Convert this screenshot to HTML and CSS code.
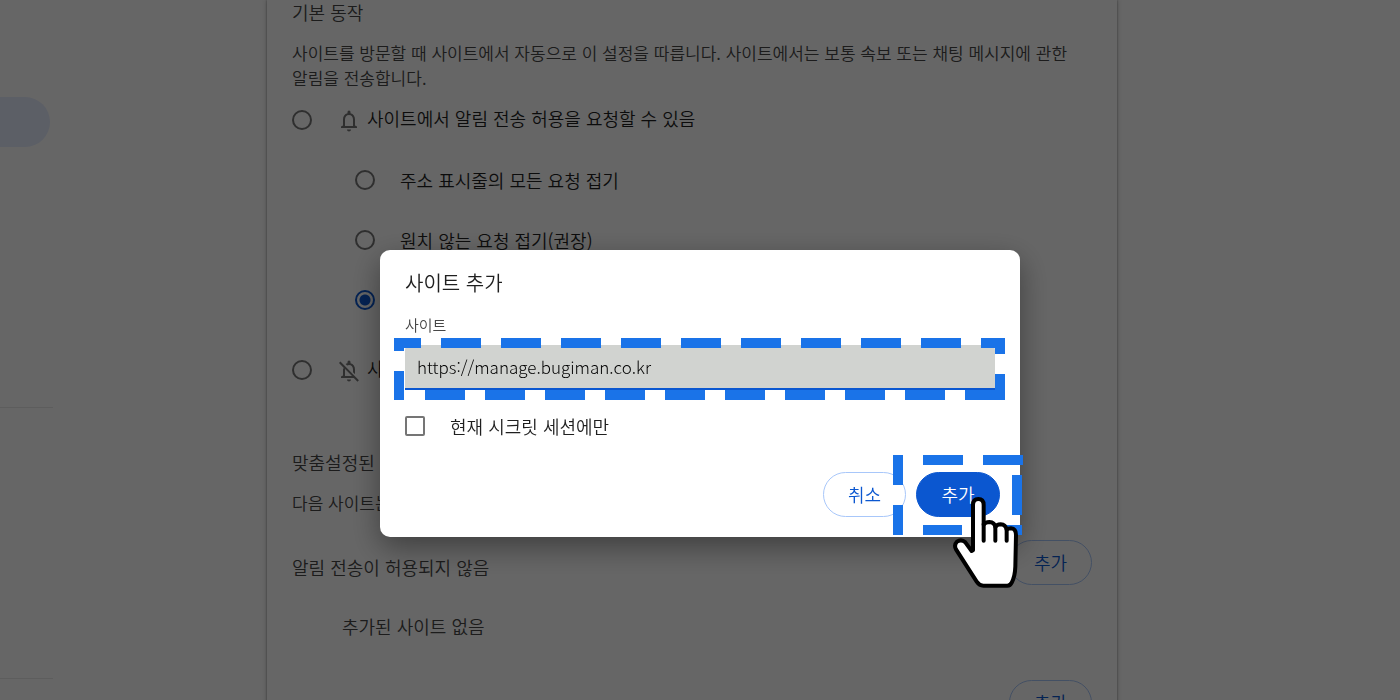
FILE: index.html
```html
<!DOCTYPE html>
<html lang="ko">
<head>
    <meta charset="UTF-8">
    <meta name="viewport" content="width=device-width, initial-scale=1.0">
    <title>알림 설정</title>
    <link rel="stylesheet" href="styles.css">
</head>
<body>
    <div class="page">
        <nav class="sidebar">
            <div class="selected"></div>
            <hr class="line1">
            <hr class="line2">
        </nav>
        <main class="card">
            <h2>기본 동작</h2>
            <p class="desc">사이트를 방문할 때 사이트에서 자동으로 이 설정을 따릅니다. 사이트에서는 보통 속보 또는 채팅 메시지에 관한 알림을 전송합니다.</p>

            <label class="row main">
                <input type="radio" name="basic">
                <svg class="bell" viewBox="0 0 24 24"><path d="M12 22.500c1.100 0 2-.9 2-2h-4c0 1.100.9 2 2 2zm6-6v-6c0-3.100-1.600-5.600-4.500-6.300V3a1.500 1.500 0 0 0-3 0v1.200C7.600 4.900 6 7.400 6 10.500v6l-2 1v1.500h16v-1.500zm-2 .5H8v-6.500C8 8 9.500 6 12 6s4 2 4 4.500z"/></svg>
                <span>사이트에서 알림 전송 허용을 요청할 수 있음</span>
            </label>
            <div class="sub">
                <label class="row"><input type="radio" name="quiet"><span>주소 표시줄의 모든 요청 접기</span></label>
                <label class="row"><input type="radio" name="quiet"><span>원치 않는 요청 접기(권장)</span></label>
                <label class="row"><input type="radio" name="quiet" checked></label>
            </div>
            <label class="row main block">
                <input type="radio" name="basic">
                <svg class="bell" viewBox="0 0 24 24"><path d="M12 22.500c1.100 0 2-.9 2-2h-4c0 1.100.9 2 2 2zM12 6c2.500 0 4 2 4 4.500v2.800l2 2v-4.800c0-3.100-1.600-5.600-4.500-6.300V3a1.500 1.500 0 0 0-3 0v1.200c-.7.200-1.300.4-1.900.8l1.500 1.500C10.700 6.200 11.300 6 12 6zM3.400 2.600 2 4l4.800 4.900c-.5.500-.8 1-.8 1.600v6l-2 1v1.500h12.800l3.700 3.700 1.400-1.400zM8 17v-6.500l.1-.4L15 17z"/></svg>
                <span>사이트</span>
            </label>

            <h2 class="custom">맞춤설정된 동작</h2>
            <p class="desc">다음 사이트는</p>

            <div class="listhead">
                <h2>알림 전송이 허용되지 않음</h2>
                <button type="button" class="btn">추가</button>
            </div>
            <p class="empty">추가된 사이트 없음</p>
            <div class="listhead last">
                <button type="button" class="btn">추가</button>
            </div>
        </main>
    </div>

    <div class="overlay">
        <div class="dialog" role="dialog" aria-labelledby="title">
            <h1 id="title">사이트 추가</h1>
            <label class="fieldname" for="site">사이트</label>
            <div class="field">
                <input type="text" id="site" value="https://manage.bugiman.co.kr">
                <!-- 입력란 강조 점선 -->
                <svg class="mark1" viewBox="0 0 611 62">
                    <path d="M0 5h27M47 5h551" stroke-dasharray="40 20" />
                    <path d="M587 5h24M606 0v16M606 36v26M5 0v13M5 33v29" />
                    <path d="M31 57h580" stroke-dasharray="40 20" />
                </svg>
            </div>
            <label class="check"><input type="checkbox"><span>현재 시크릿 세션에만</span></label>
            <div class="buttons">
                <button type="button" class="btn">취소</button>
                <div class="addwrap">
                    <button type="button" class="btn add">추가</button>
                    <!-- 추가 버튼 강조 점선 -->
                    <svg class="mark2" viewBox="0 0 130 81">
                        <path d="M5 0v30M5 50v30M30 5h40M90 5h40M124 20v40M30 75h39M90 75h39"/>
                    </svg>
                    <svg class="hand" viewBox="396 168 204 279">
                        <path fill="#fff" d="M459 331V195Q459 177 475 177Q491 177 491 195V254Q496 246 508 246Q524 247 526 261Q530 253 542 253Q557 254 560 269Q564 265 573 265Q588 266 588 285L586 380Q585 410 575 428Q571 437 562 437H490Q478 437 470 425L408 328Q401 315 411 305Q424 296 436 307L455 333Z"/>
                        <path fill="none" d="M491 252V302M526 260V302M560 268V302"/>
                    </svg>
                </div>
            </div>
        </div>
    </div>
</body>
</html>
```
FILE: styles.css
```css
* {
    box-sizing: border-box;
}

body {
    margin: 0;
    height: 100vh;
    overflow: hidden;
    background: #fff;
    color: #1f1f1f;
    font-family: "Noto Sans CJK KR", sans-serif;
    font-size: 18px;
    font-weight: 350;
    line-height: 25px;
    word-break: keep-all;
}

h1, h2, p {
    margin: 0;
    font-weight: 350;
}

h2 {
    font-size: 18px;
    color: #474747;
}

.page {
    display: grid;
    grid-template-columns: 267px minmax(0, 850px) 1fr;
    min-height: 100vh;
}

/* 왼쪽 메뉴 */
.sidebar {
    width: 53px;
    padding-top: 97px;
}
.selected {
    width: 50px;
    height: 50px;
    background: #e6edff;
    border-radius: 0 25px 25px 0;
}
.sidebar hr {
    margin: 0;
    border: 0;
    border-top: 1px solid #e8e8e8;
}
.sidebar .line1 {
    margin-top: 260px;
}
.sidebar .line2 {
    margin-top: 270px;
}

.card {
    padding: 0 25px;
    box-shadow: 0 0 2px rgba(0, 0, 0, 0.4), 0 0 6px rgba(0, 0, 0, 0.2);
}
.desc {
    margin-top: 15px;
    font-size: 17px;
    color: #474747;
}

.row {
    display: flex;
    align-items: center;
    height: 60px;
    color: #1f1f1f;
}
.main span {
    padding-bottom: 3px;
}
.sub {
    padding-left: 63px;
}
.sub .row {
    gap: 25px;
}
.block {
    margin-top: 10px;
}

input[type="radio"] {
    appearance: none;
    flex: none;
    width: 20px;
    height: 20px;
    margin: 0;
    border: 2px solid #757575;
    border-radius: 50%;
}
input[type="radio"]:checked {
    border-color: #0b57d0;
    background: radial-gradient(circle, #0b57d0 5px, transparent 6px);
}
.bell {
    width: 24px;
    height: 24px;
    margin: 2px 6px 0 25px;
    fill: #757575;
}

.custom {
    margin-top: 50px;
}
.listhead {
    display: flex;
    justify-content: space-between;
    align-items: center;
    margin-top: 25px;
}
.listhead h2 {
    padding-top: 10px;
}
.last {
    justify-content: flex-end;
}
.empty {
    margin: 29px 0 41px 50px;
    color: #474747;
}

.btn {
    width: 83px;
    height: 45px;
    padding: 0;
    border: 1px solid #a8c7fa;
    border-radius: 23px;
    background: transparent;
    color: #0b57d0;
    font: inherit;
}

/* 사이트 추가 창 */
.overlay {
    position: fixed;
    inset: 0;
    padding-top: 250px;
    background: rgba(0, 0, 0, 0.6);
}
.dialog {
    max-width: 640px;
    margin: 0 auto;
    padding: 18px 20px 20px 25px;
    border-radius: 10px;
    background: #fff;
    box-shadow: 0 10px 30px rgba(0, 0, 0, 0.4);
}
.dialog h1 {
    font-size: 20px;
    line-height: 30px;
}
.fieldname {
    display: block;
    margin-top: 17px;
    font-size: 15px;
    line-height: 20px;
    color: #474747;
}
.field {
    position: relative;
    margin: 10px 5px 0 0;
}
.field input {
    display: block;
    width: 100%;
    height: 45px;
    padding: 0 12px;
    border: 0;
    border-bottom: 2px solid #0b57d0;
    border-radius: 5px 5px 0 0;
    outline: 0;
    background: #d1d3d0;
    color: #000;
    font: inherit;
    font-size: 17px;
    font-weight: 300;
}
.mark1, .mark2 {
    position: absolute;
    fill: none;
    stroke: #1a73e8;
    stroke-width: 10px;
}
.mark1 {
    left: -11px;
    top: -7px;
    width: 611px;
    height: 62px;
}
.check {
    display: flex;
    align-items: center;
    gap: 25px;
    height: 30px;
    margin-top: 21px;
}
.check input {
    appearance: none;
    width: 20px;
    height: 20px;
    margin: 0;
    border: 2px solid #757575;
    border-radius: 2px;
}
.buttons {
    display: flex;
    justify-content: flex-end;
    gap: 10px;
    margin-top: 31px;
}
.addwrap {
    position: relative;
}
.add {
    display: block;
    width: 84px;
    border-color: #0b57d0;
    background: #0b57d0;
    color: #fff;
}
.mark2 {
    left: -23px;
    top: -17px;
    width: 130px;
    height: 81px;
}
.hand {
    position: absolute;
    left: 36px;
    top: 24px;
    width: 68px;
    height: 93px;
    stroke: #000;
    stroke-width: 12px;
    stroke-linecap: round;
    stroke-linejoin: round;
}
```
